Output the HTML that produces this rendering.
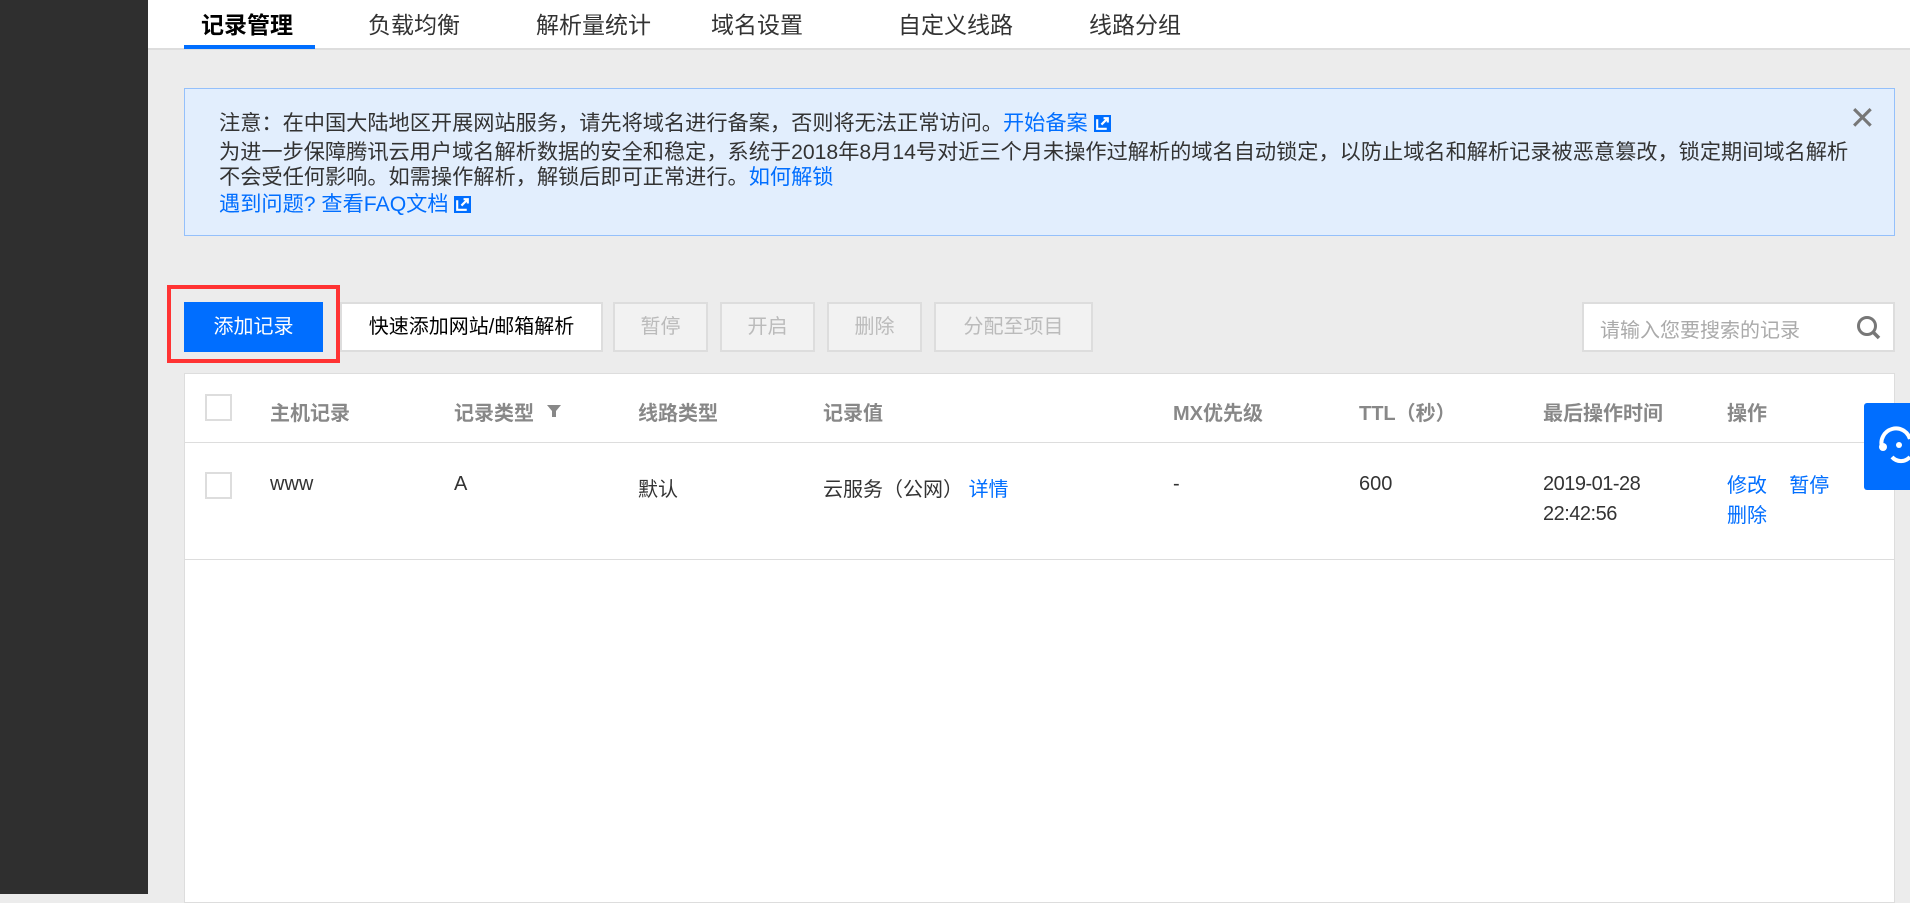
<!DOCTYPE html>
<html><head><meta charset="utf-8"><style>
*{margin:0;padding:0;box-sizing:border-box}
body{width:1910px;height:894px;overflow:hidden;background:#ececec;font-family:"Liberation Sans","Noto Sans CJK SC",sans-serif;position:relative;color:#333}
.a{position:absolute;white-space:nowrap}
.side{left:0;top:0;width:148px;height:894px;background:#2f2f2f}
.top{left:148px;top:0;width:1762px;height:50px;background:#fff;border-bottom:2px solid #ddd}
.tab{top:6px;font-size:23px;color:#333}
.note{left:184px;top:88px;width:1711px;height:148px;background:#e2eefd;border:1px solid #94c0fb}
.nt{left:219px;font-size:21.2px;color:#333}
.blue{color:#006eff !important}
.btn{top:302px;height:50px;border:2px solid #ddd;background:#f2f2f2;color:#bbb;font-size:20px;text-align:center;line-height:46px}
.tbl{left:184px;top:373px;width:1711px;height:530px;background:#fff;border:1px solid #ddd}
.h{top:397px;font-size:20px;font-weight:bold;color:#888}
.c{top:473px;font-size:20px;color:#333}
.cb{width:27px;height:27px;border:2px solid #ddd;background:#fff}
</style></head><body>
<div class="a side"></div>
<div class="a top"></div>
<div class="a tab" style="left:201px;font-weight:bold;color:#000">记录管理</div>
<div class="a" style="left:184px;top:45px;width:131px;height:4px;background:#006eff"></div>
<div class="a tab" style="left:368px">负载均衡</div>
<div class="a tab" style="left:536px">解析量统计</div>
<div class="a tab" style="left:711px">域名设置</div>
<div class="a tab" style="left:898px">自定义线路</div>
<div class="a tab" style="left:1089px">线路分组</div>

<div class="a note"></div>
<div class="a nt" style="top:106px">注意：在中国大陆地区开展网站服务，请先将域名进行备案，否则将无法正常访问。<span class="blue">开始备案 <svg width="17" height="17" viewBox="0 0 16 16" style="vertical-align:-2px"><rect width="16" height="16" fill="#006eff"/><path d="M3 4v9h9" fill="none" stroke="#fff" stroke-width="2"/><path d="M7 9l6-6M9 3h4v4" fill="none" stroke="#fff" stroke-width="2"/></svg></span></div>
<div class="a nt" style="top:135px">为进一步保障腾讯云用户域名解析数据的安全和稳定，系统于2018年8月14号对近三个月未操作过解析的域名自动锁定，以防止域名和解析记录被恶意篡改，锁定期间域名解析</div>
<div class="a nt" style="top:160px">不会受任何影响。如需操作解析，解锁后即可正常进行。<span class="blue">如何解锁</span></div>
<div class="a nt blue" style="top:187px">遇到问题? 查看FAQ文档 <svg width="17" height="17" viewBox="0 0 16 16" style="vertical-align:-2px"><rect width="16" height="16" fill="#006eff"/><path d="M3 4v9h9" fill="none" stroke="#fff" stroke-width="2"/><path d="M7 9l6-6M9 3h4v4" fill="none" stroke="#fff" stroke-width="2"/></svg></div>
<div class="a" style="left:1849px;top:100px;font-size:32px;color:#777;line-height:36px">✕</div>

<div class="a" style="left:167px;top:285px;width:173px;height:78px;border:4px solid #f33"></div>
<div class="a" style="left:184px;top:302px;width:139px;height:50px;background:#006eff;color:#fff;font-size:20px;text-align:center;line-height:50px">添加记录</div>
<div class="a btn" style="left:340px;width:263px;background:#fff;color:#000">快速添加网站/邮箱解析</div>
<div class="a btn" style="left:613px;width:95px">暂停</div>
<div class="a btn" style="left:720px;width:95px">开启</div>
<div class="a btn" style="left:827px;width:95px">删除</div>
<div class="a btn" style="left:934px;width:159px">分配至项目</div>
<div class="a" style="left:1582px;top:302px;width:313px;height:50px;background:#fff;border:2px solid #ddd"></div>
<div class="a" style="left:1600px;top:314px;font-size:20px;color:#aaa">请输入您要搜索的记录</div>
<svg class="a" style="left:1855px;top:314px" width="28" height="28" viewBox="0 0 28 28"><circle cx="12" cy="12" r="8.5" fill="none" stroke="#777" stroke-width="3"/><path d="M18 18l6 6" stroke="#777" stroke-width="3.5"/></svg>

<div class="a tbl"></div>
<div class="a" style="left:184px;top:442px;width:1711px;height:1px;background:#ddd"></div>
<div class="a" style="left:184px;top:559px;width:1711px;height:1px;background:#ddd"></div>
<div class="a cb" style="left:205px;top:394px"></div>
<div class="a cb" style="left:205px;top:472px"></div>
<div class="a h" style="left:270px">主机记录</div>
<div class="a h" style="left:454px">记录类型 <svg width="16" height="16" viewBox="0 0 16 16" style="margin-left:6px;vertical-align:0"><path d="M1 1h14L10 7v6H6V7z" fill="#888"/></svg></div>
<div class="a h" style="left:638px">线路类型</div>
<div class="a h" style="left:823px">记录值</div>
<div class="a h" style="left:1173px">MX优先级</div>
<div class="a h" style="left:1359px">TTL（秒）</div>
<div class="a h" style="left:1543px">最后操作时间</div>
<div class="a h" style="left:1727px">操作</div>
<div class="a c" style="left:270px">www</div>
<div class="a c" style="left:454px">A</div>
<div class="a c" style="left:638px">默认</div>
<div class="a c" style="left:823px">云服务（公网） <span class="blue">详情</span></div>
<div class="a c" style="left:1173px">-</div>
<div class="a c" style="left:1359px">600</div>
<div class="a c" style="left:1543px;line-height:30px;top:469px;letter-spacing:-0.5px">2019-01-28<br>22:42:56</div>
<div class="a c blue" style="left:1727px;line-height:30px;top:471px">修改&nbsp;&nbsp;&nbsp; 暂停<br>删除</div>

<div class="a" style="left:1864px;top:403px;width:46px;height:87px;background:#006eff;border-radius:3px 0 0 3px"></div>
<svg class="a" style="left:1878px;top:425px" width="32" height="40" viewBox="0 0 32 40"><path d="M4 22a14 14 0 0 1 28-8" fill="none" stroke="#fff" stroke-width="4"/><circle cx="5" cy="22" r="4" fill="#fff"/><circle cx="21" cy="20" r="3" fill="#fff"/><path d="M14 32a12 12 0 0 0 18 0" fill="none" stroke="#fff" stroke-width="4"/></svg>
</body></html>
